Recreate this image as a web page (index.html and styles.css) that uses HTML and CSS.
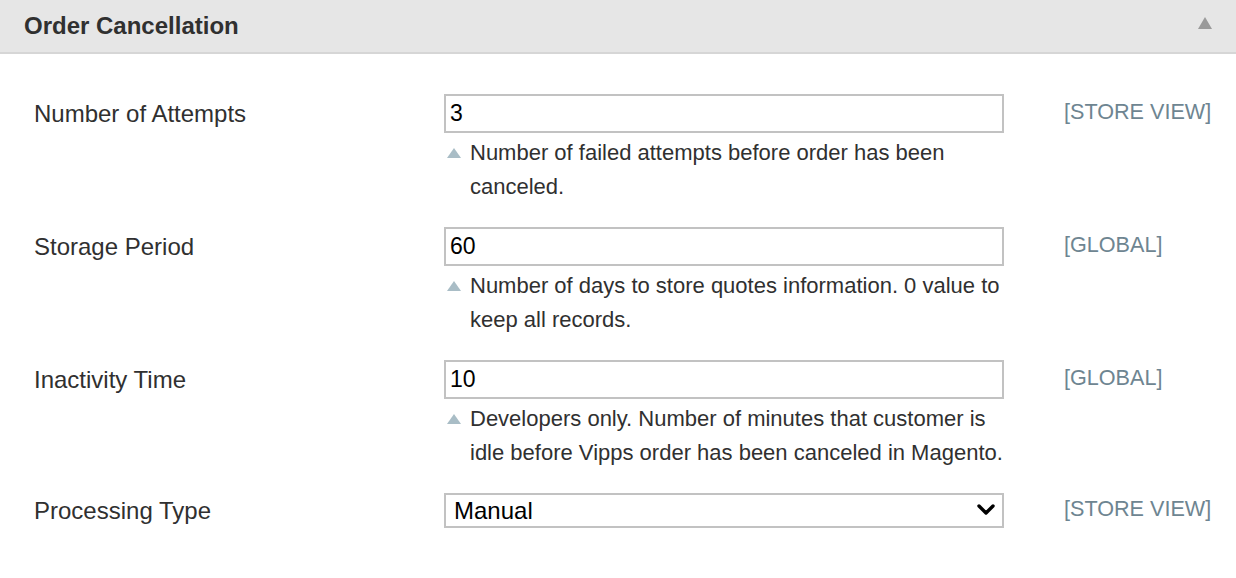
FILE: index.html
```html
<!DOCTYPE html>
<html>
<head>
<meta charset="utf-8">
<link rel="stylesheet" href="styles.css">
</head>
<body>
<div class="section">
  <div class="section-head">
    <span class="section-title">Order Cancellation</span>
    <svg class="collapse" width="14" height="12" viewBox="0 0 14 12"><polygon points="7,0 14,12 0,12" fill="#9a9a9a"/></svg>
  </div>
  <div class="fields">
    <div class="row">
      <div class="label">Number of Attempts</div>
      <div class="control">
        <input class="text-input" type="text" value="3">
        <div class="hint"><span class="tri"></span><span class="hint-text">Number of failed attempts before order has been canceled.</span></div>
      </div>
      <div class="scope">[STORE VIEW]</div>
    </div>
    <div class="row">
      <div class="label">Storage Period</div>
      <div class="control">
        <input class="text-input" type="text" value="60">
        <div class="hint"><span class="tri"></span><span class="hint-text">Number of days to store quotes information. 0 value to keep all records.</span></div>
      </div>
      <div class="scope">[GLOBAL]</div>
    </div>
    <div class="row">
      <div class="label">Inactivity Time</div>
      <div class="control">
        <input class="text-input" type="text" value="10">
        <div class="hint"><span class="tri"></span><span class="hint-text">Developers only. Number of minutes that customer is idle before Vipps order has been canceled in Magento.</span></div>
      </div>
      <div class="scope">[GLOBAL]</div>
    </div>
    <div class="row">
      <div class="label label-select">Processing Type</div>
      <div class="control">
        <div class="select-wrap">
          <select class="select"><option>Manual</option><option>Automatic</option></select>
          <svg class="chevron" width="18" height="12" viewBox="0 0 18 12"><polyline points="2,2 9,9 16,2" fill="none" stroke="#000" stroke-width="3.4" stroke-linecap="round" stroke-linejoin="round"/></svg>
        </div>
      </div>
      <div class="scope scope-select">[STORE VIEW]</div>
    </div>
  </div>
</div>
</body>
</html>
```

FILE: styles.css
```css
html, body {
  margin: 0;
  padding: 0;
  background: #fff;
}
body {
  font-family: "Liberation Sans", Arial, Helvetica, sans-serif;
  color: #303030;
}
.section-head {
  height: 52px;
  background: #e6e6e6;
  border-bottom: 2px solid #d6d6d6;
  display: flex;
  align-items: center;
  justify-content: space-between;
  padding: 0 24px 0 24px;
}
.section-title {
  font-size: 24px;
  font-weight: bold;
  color: #303030;
  line-height: 1;
}
.collapse {
  display: block;
  margin-top: -6px;
}
.fields {
  padding: 40px 0 0 34px;
}
.row {
  display: grid;
  grid-template-columns: 410px 560px auto;
  align-items: start;
  margin-bottom: 23px;
}
.label {
  font-size: 24px;
  line-height: 39px;
  color: #303030;
}
.label-select {
  line-height: 35px;
}
.control {
  display: flex;
  flex-direction: column;
}
.text-input {
  box-sizing: border-box;
  width: 560px;
  height: 39px;
  margin: 0;
  border: 2px solid #c2c2c2;
  padding: 0 4px;
  font-family: "Liberation Sans", Arial, sans-serif;
  font-size: 23px;
  color: #000;
  background: #fff;
  outline: none;
}
.hint {
  display: flex;
  margin-top: 3px;
  margin-right: -14px;
  font-size: 22px;
  line-height: 34px;
  color: #303030;
}
.tri {
  flex: none;
  width: 0;
  height: 0;
  border-left: 7px solid transparent;
  border-right: 7px solid transparent;
  border-bottom: 10px solid #a9bdc6;
  margin: 12px 9px 0 3px;
}
.hint-text {
  flex: 1;
}
.scope {
  font-size: 21.6px;
  line-height: 39px;
  color: #6e8591;
  padding-left: 60px;
  margin-top: -2px;
}
.scope-select {
  line-height: 35px;
}
.select-wrap {
  position: relative;
  width: 560px;
}
.select {
  box-sizing: border-box;
  display: block;
  width: 560px;
  height: 35px;
  margin: 0;
  border: 2px solid #c2c2c2;
  border-radius: 0;
  padding: 0 40px 0 8px;
  font-family: "Liberation Sans", Arial, sans-serif;
  font-size: 24px;
  color: #000;
  background: #fff;
  -webkit-appearance: none;
  appearance: none;
  outline: none;
}
.chevron {
  position: absolute;
  right: 9px;
  top: 11px;
  pointer-events: none;
}
```
